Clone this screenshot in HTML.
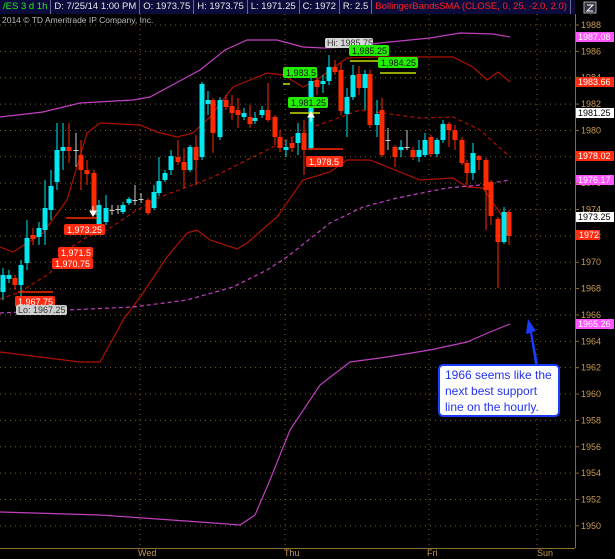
<!DOCTYPE html>
<html><head><meta charset="utf-8">
<style>
html,body{margin:0;padding:0;background:#000;}
body{width:615px;height:559px;overflow:hidden;position:relative;font-family:"Liberation Sans",sans-serif;}
svg{position:absolute;left:0;top:0;}
.hdr{position:absolute;left:0;top:0;height:14px;width:575px;background:#0c0c3c;display:flex;font-size:9.5px;line-height:14px;color:#e8e8e8;white-space:nowrap;overflow:hidden}
.hdr span{padding:0 3px;border-right:1px solid #6a6a9a}
.note{position:absolute;left:438px;top:364px;width:118px;height:49px;background:#fff;border:2px solid #1a3cff;border-radius:5px;color:#2233ee;font-size:12px;line-height:16px;padding:1px 0 0 5px;box-sizing:border-box;width:122px;height:53px}
</style></head><body>
<svg width="615" height="559" id="s">
<g stroke="#7a5f25" stroke-width="1" stroke-dasharray="1,4" id="grid"></g>
<text x="2" y="23" fill="#bbbbbb" font-size="8.5" font-family="Liberation Sans">2014 © TD Ameritrade IP Company, Inc.</text>
<!-- magenta upper -->
<polyline fill="none" stroke="#c040c0" stroke-width="1.2" points="0,117 43,112 80,103 133,100 150,97 200,70 225,50 247,40 277,40 303,47 323,48 350,47 380,43 430,38 460,33 493,34 510,37"/>
<!-- red upper -->
<polyline fill="none" stroke="#b01000" stroke-width="1.2" points="0,247 13,252 43,233 67,200 87,133 100,123 140,125 157,132 177,137 193,133 210,117 233,87 250,80 267,73 283,75 303,87 317,80 330,70 347,58 380,57 453,57 473,67 487,80 498,72 510,82"/>
<!-- red lower -->
<polyline fill="none" stroke="#b01000" stroke-width="1.2" points="0,352 40,357 80,362 100,362 115,335 123,320 143,293 167,257 187,233 197,230 210,240 237,249 247,243 277,217 303,180 330,172 347,160 370,160 420,180 453,178 467,187 483,188 493,203 510,227"/>
<!-- red mid dashed -->
<polyline fill="none" stroke="#b01000" stroke-width="1.2" stroke-dasharray="4,3" points="0,299 20,292 50,273 67,250 87,237 107,230 137,210 160,197 187,187 213,177 267,150 313,127 360,110 420,118 453,117 480,130 510,157"/>
<!-- magenta dashed -->
<polyline fill="none" stroke="#c040c0" stroke-width="1.2" stroke-dasharray="4,3" points="0,313 67,310 133,307 187,300 233,287 267,270 287,257 330,223 363,207 397,198 447,188 480,185 510,180"/>
<!-- magenta lower -->
<polyline fill="none" stroke="#c040c0" stroke-width="1.2" points="0,512 100,515 200,522 240,525 255,515 270,480 290,430 320,385 350,362 380,358 393,356 430,350 467,342 490,332 510,324"/>
<g id="candles"></g>
<!-- level lines -->
<g stroke-width="1.5">
<line x1="18" y1="292" x2="53" y2="292" stroke="#ff2a00"/>
<line x1="66" y1="218" x2="97" y2="218" stroke="#ff2a00"/>
<line x1="308" y1="149" x2="343" y2="149" stroke="#ff2a00"/>
<line x1="290" y1="113" x2="320" y2="113" stroke="#c8e000"/>
<line x1="283" y1="84" x2="290" y2="84" stroke="#c8e000"/>
<line x1="350" y1="61" x2="380" y2="61" stroke="#c8e000"/>
<line x1="380" y1="73" x2="416" y2="73" stroke="#c8e000"/>
</g>
<g font-size="9" font-family="Liberation Sans">
<rect x="15" y="296" width="40" height="11" rx="2" fill="#ff2a10"/><text x="18" y="305" fill="#fff">1,967.75</text>
<rect x="16" y="305" width="51" height="10" rx="2" fill="#cfcfcf"/><text x="18" y="313" fill="#333">Lo: 1967.25</text>
<rect x="58" y="247" width="35" height="11" rx="2" fill="#ff2a10"/><text x="61" y="256" fill="#fff">1,971.5</text>
<rect x="52" y="258" width="41" height="11" rx="2" fill="#ff2a10"/><text x="55" y="267" fill="#fff">1,970.75</text>
<rect x="64" y="224" width="41" height="11" rx="2" fill="#ff2a10"/><text x="67" y="233" fill="#fff">1,973.25</text>
<rect x="306" y="156" width="37" height="11" rx="2" fill="#ff2a10"/><text x="309" y="165" fill="#fff">1,978.5</text>
<rect x="288" y="97" width="40" height="11" rx="2" fill="#22ee00"/><text x="291" y="106" fill="#111">1,981.25</text>
<rect x="283" y="67" width="34" height="11" rx="2" fill="#22ee00"/><text x="286" y="76" fill="#111">1,983.5</text>
<rect x="325" y="38" width="48" height="10" rx="2" fill="#d8d8d8"/><text x="327" y="46" fill="#333">Hi: 1985.75</text>
<rect x="349" y="45" width="40" height="11" rx="2" fill="#22ee00"/><text x="352" y="54" fill="#111">1,985.25</text>
<rect x="378" y="57" width="40" height="11" rx="2" fill="#22ee00"/><text x="381" y="66" fill="#111">1,984.25</text>
</g>
<!-- arrows -->
<path d="M93,206 v5 h-3 l3,5 l3,-5 h-3" fill="#fff" stroke="#fff"/>
<path d="M311,122 v-5 h-3 l3,-5 l3,5 h-3" fill="#fff" stroke="#fff"/>
<!-- axes -->
<line x1="575.5" y1="14" x2="575.5" y2="548" stroke="#8a6a30"/>
<line x1="0" y1="548.5" x2="575" y2="548.5" stroke="#8a6a30"/>
<g id="axis" font-size="9" fill="#c89a50" font-family="Liberation Sans"></g>
<g font-size="9" fill="#c89a50" font-family="Liberation Sans">
<text x="138" y="556">Wed</text><text x="284" y="556">Thu</text><text x="427" y="556">Fri</text><text x="537" y="556">Sun</text>
</g>
<g font-size="9" font-family="Liberation Sans">
<rect x="576" y="32" width="38" height="10" fill="#ff55ff"/><text x="578" y="40" fill="#fff">1987.08</text>
<rect x="576" y="77" width="38" height="10" fill="#ff2a10"/><text x="578" y="85" fill="#fff">1983.66</text>
<rect x="576" y="108" width="38" height="10" fill="#fff"/><text x="578" y="116" fill="#000">1981.25</text>
<rect x="576" y="151" width="38" height="10" fill="#ff2a10"/><text x="578" y="159" fill="#fff">1978.02</text>
<rect x="576" y="175" width="38" height="10" fill="#ff55ff"/><text x="578" y="183" fill="#fff">1976.17</text>
<rect x="576" y="212" width="38" height="10" fill="#fff"/><text x="578" y="220" fill="#000">1973.25</text>
<rect x="576" y="230" width="24" height="10" fill="#ff2a10"/><text x="579" y="238" fill="#fff">1972</text>
<rect x="576" y="319" width="38" height="10" fill="#ff55ff"/><text x="578" y="327" fill="#fff">1965.26</text>
</g>
<!-- icon -->
<rect x="584" y="2" width="12" height="11" fill="#334" stroke="#aaa"/>
<path d="M587,5 h6 l-6,6 h6" stroke="#fff" fill="none"/>
<!-- callout arrow -->
<path d="M535,364 L530,333 L526,334 L528,319 L536,331 L532,332 L538,364 Z" fill="#1a3cff"/>
</svg>
<div class="hdr"><span style="color:#22ee22">/ES 3 d 1h</span><span>D: 7/25/14 1:00 PM</span><span>O: 1973.75</span><span>H: 1973.75</span><span>L: 1971.25</span><span>C: 1972</span><span>R: 2.5</span><span style="color:#ff2020">BollingerBandsSMA (CLOSE, 0, 25, -2.0, 2.0)</span><span style="color:#ff2020;border:none">1978...</span></div>
<div class="note">1966 seems like the next best support line on the hourly.</div>
<script>
var ns="http://www.w3.org/2000/svg";
function el(p,t,a){var e=document.createElementNS(ns,t);for(var k in a)e.setAttribute(k,a[k]);p.appendChild(e);return e;}
var g=document.getElementById('grid');
for(var p=1988;p>=1950;p-=2){var y=25+(1988-p)*13.18;el(g,'line',{x1:0,x2:575,y1:y,y2:y});
el(document.getElementById('axis'),'text',{x:581,y:y+3}).textContent=p;
el(document.getElementById('s'),'line',{x1:575,x2:579,y1:y,y2:y,stroke:'#8a6a30'});}
[140,285,429,537].forEach(function(x){el(g,'line',{x1:x,x2:x,y1:14,y2:548});});
var C={c:'#00e8f0',r:'#ff2a00',g:'#cccccc'};
var d=[[3,'c',275,292,268,300],[9,'c',275,279,270,283],[15,'r',278,285,275,290],[21,'c',265,285,260,300],[27,'c',238,263,220,270],[33,'r',235,239,228,245],[39,'c',228,237,222,245],[45,'c',208,230,180,245],[51,'c',186,210,170,220],[57,'c',150,182,123,190],[63,'c',147,151,123,170],[69,'r',147,151,123,163],[76,'g',150,151,133,167],[81,'r',155,170,140,190],[87,'r',170,174,160,185],[94,'r',173,215,170,215],[99,'c',205,225,200,228],[106,'c',208,222,195,225],[112,'g',210,211,205,215],[118,'g',209,210,205,214],[123,'c',205,212,202,214],[129,'c',199,203,197,205],[135,'g',200,201,185,205],[141,'g',199,200,193,203],[148,'r',200,213,198,215],[154,'c',192,208,185,210],[159,'c',181,193,157,196],[165,'c',173,180,170,182],[171,'c',156,170,150,175],[178,'r',157,162,140,165],[184,'r',162,170,148,188],[190,'c',147,170,145,172],[196,'r',147,160,135,185],[202,'c',84,157,82,160],[208,'c',100,104,91,115],[213,'r',100,133,98,153],[220,'c',100,137,97,140],[226,'r',100,107,95,110],[232,'r',106,113,95,120],[238,'r',110,115,98,128],[244,'c',113,117,108,120],[250,'r',117,124,105,128],[255,'c',118,121,112,124],[262,'c',110,115,106,118],[268,'r',110,120,83,122],[275,'r',117,137,115,145],[280,'r',137,148,130,152],[286,'c',147,150,140,157],[292,'r',143,148,138,152],[298,'c',133,143,123,155],[304,'r',133,150,120,175],[311,'c',81,148,78,150],[317,'r',80,87,73,95],[323,'c',81,84,75,93],[329,'c',67,81,55,85],[335,'r',67,72,60,75],[341,'r',70,111,63,115],[347,'c',97,114,88,137],[353,'c',75,97,65,100],[359,'r',74,88,66,95],[365,'c',74,88,70,110],[370,'r',74,125,70,128],[377,'c',114,125,100,137],[382,'r',110,155,98,157],[388,'g',140,141,128,150],[395,'r',147,157,145,167],[401,'c',147,150,140,157],[407,'g',147,148,130,150],[413,'r',150,157,147,160],[419,'c',150,157,140,162],[425,'c',140,155,133,157],[431,'r',137,154,135,157],[437,'c',140,154,138,157],[443,'c',124,140,120,143],[449,'r',124,130,122,147],[455,'r',130,140,125,150],[462,'r',140,163,137,165],[467,'r',163,173,160,185],[473,'c',153,173,143,180],[479,'r',156,160,155,170],[486,'r',160,190,158,230],[491,'r',182,216,180,225],[498,'r',219,242,217,288],[504,'c',212,242,207,244],[509,'r',212,236,210,245]];
var cg=document.getElementById('candles');
d.forEach(function(k){var col=C[k[1]];el(cg,'line',{x1:k[0],x2:k[0],y1:k[4],y2:k[5],stroke:col,'stroke-width':1});
el(cg,'rect',{x:k[0]-2.5,y:k[2],width:5,height:Math.max(1,k[3]-k[2]),fill:col});});
</script>
</body></html>
